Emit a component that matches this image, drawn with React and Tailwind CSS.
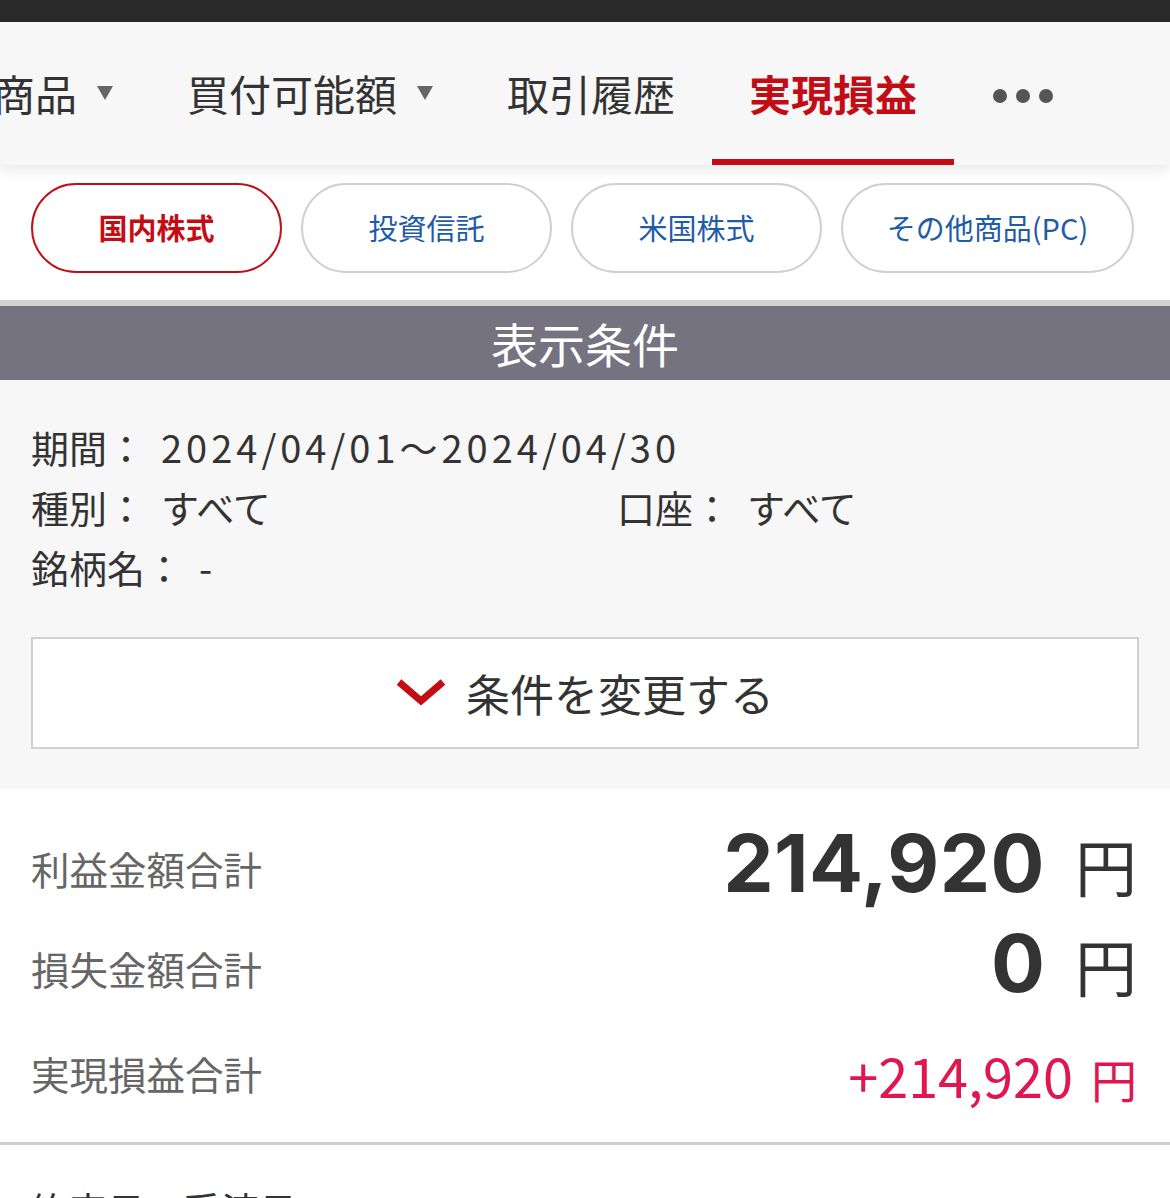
import React from 'react';

const tabs = [
  { label: '商品', caret: true },
  { label: '買付可能額', caret: true },
  { label: '取引履歴' },
  { label: '実現損益', active: true },
];

const products = [
  { label: '国内株式', active: true, width: 'w-[251px]' },
  { label: '投資信託', width: 'w-[251px]' },
  { label: '米国株式', width: 'w-[251px]' },
  { label: 'その他商品(PC)', width: 'w-[293px]' },
];

function Caret() {
  return (
    <svg width="16" height="14" viewBox="0 0 16 14" className="shrink-0">
      <path d="M0 0h16L8 14z" fill="#666" />
    </svg>
  );
}

function Chevron() {
  return (
    <svg width="50" height="28" viewBox="0 0 50 28" className="shrink-0">
      <path d="M3 3l22 19 22-19" fill="none" stroke="#c30d16" strokeWidth="7" strokeLinejoin="miter" />
    </svg>
  );
}

export default function App() {
  return (
    <div className="h-[1198px] w-full overflow-hidden bg-white font-['Noto_Sans_CJK_JP',sans-serif]">
      {/* status strip */}
      <div className="h-[22px] bg-[#2a2a2a]" />

      {/* tab bar */}
      <div className="relative z-10 h-[143px] overflow-hidden bg-[#f7f7f7] shadow-[0_6px_12px_rgba(0,0,0,0.08)]">
        <div className="ml-[-44px] flex h-full items-stretch">
          {tabs.map((t) => (
            <div
              key={t.label}
              className={`flex shrink-0 items-center gap-[20px] border-b-[6px] px-[37px] pt-[4px] text-[42px] ${
                t.active ? 'border-[#c30d16] font-bold text-[#c30d16]' : 'border-transparent text-[#333]'
              }`}
            >
              <span>{t.label}</span>
              {t.caret && <Caret />}
            </div>
          ))}
          <div className="ml-[39px] flex items-center gap-[9px] pt-[4px]">
            <span className="h-[14px] w-[14px] rounded-full bg-[#555]" />
            <span className="h-[14px] w-[14px] rounded-full bg-[#555]" />
            <span className="h-[14px] w-[14px] rounded-full bg-[#555]" />
          </div>
        </div>
      </div>

      {/* product pills */}
      <div className="flex gap-[19px] bg-white pb-[27px] pl-[31px] pt-[18px]">
        {products.map((p) => (
          <div
            key={p.label}
            className={`flex h-[90px] shrink-0 items-center justify-center rounded-full border-2 text-[29px] ${p.width} ${
              p.active ? 'border-[#c30d16] font-bold text-[#c30d16]' : 'border-[#d0d0d0] text-[#1f5ca8]'
            }`}
          >
            {p.label}
          </div>
        ))}
      </div>

      {/* conditions header */}
      <div className="h-[6px] bg-[#d2d2d6]" />
      <div className="flex h-[74px] items-center justify-center bg-[#75737f] text-[47px] text-white">
        表示条件
      </div>

      {/* conditions */}
      <div className="bg-[#f7f7f7] px-[31px] pb-[40px] pt-[37px] text-[38px] leading-[60px] text-[#333]">
        <div className="flex">
          <span>期間：</span>
          <span className="ml-4 tracking-[4px]">2024/04/01～2024/04/30</span>
        </div>
        <div className="flex">
          <div className="flex w-[586px]">
            <span>種別：</span>
            <span className="ml-4">すべて</span>
          </div>
          <span>口座：</span>
          <span className="ml-4">すべて</span>
        </div>
        <div className="flex">
          <span>銘柄名：</span>
          <span className="ml-4">-</span>
        </div>
        <div className="mt-[40px] flex h-[112px] items-center justify-center gap-[20px] border-2 border-[#d0d0d0] bg-white">
          <Chevron />
          <span className="text-[44px] text-[#333]">条件を変更する</span>
        </div>
      </div>

      {/* summary */}
      <div className="bg-white pl-[31px] pr-[33px] pt-[30px]">
        <div className="flex h-[100px] items-center justify-between">
          <span className="text-[38.5px] text-[#666]">利益金額合計</span>
          <div className="mb-[12px] flex items-baseline text-[#333]">
            <span className="font-['Inter',sans-serif] text-[80px] font-bold tracking-[0.5px]">214,920</span>
            <span className="ml-[30px] text-[62px]">円</span>
          </div>
        </div>
        <div className="flex h-[100px] items-center justify-between">
          <span className="text-[38.5px] text-[#666]">損失金額合計</span>
          <div className="mb-[12px] flex items-baseline text-[#333]">
            <span className="font-['Inter',sans-serif] text-[80px] font-bold">0</span>
            <span className="ml-[30px] text-[62px]">円</span>
          </div>
        </div>
        <div className="flex h-[110px] items-center justify-between">
          <span className="text-[38.5px] text-[#666]">実現損益合計</span>
          <div className="flex items-baseline text-[#e0174f]">
            <span className="text-[54px]">+214,920</span>
            <span className="ml-[18px] text-[46px]">円</span>
          </div>
        </div>
      </div>

      <div className="mt-[13px] border-t-[3px] border-[#cfcfcf]" />
      <div className="px-[31px] pt-[34px] text-[38px] leading-[60px] text-[#333]">約定日・受渡日</div>
    </div>
  );
}
